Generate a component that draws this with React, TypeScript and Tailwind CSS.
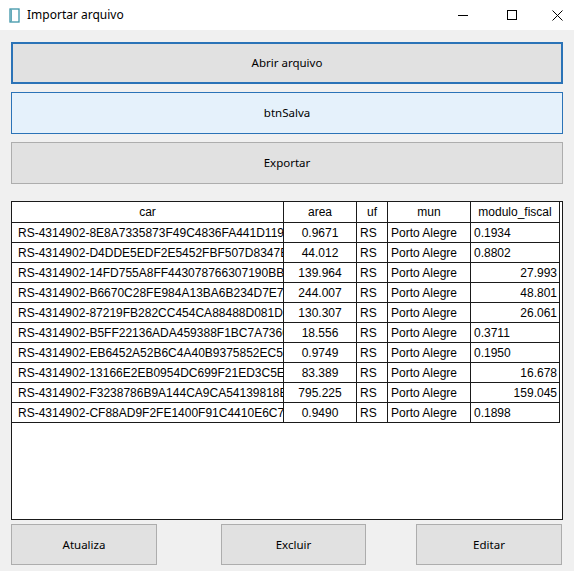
import React from "react";

type Row = { car: string; area: string; uf: string; mun: string; mf: string; right: boolean };

const rows: Row[] = [
  { car: "RS-4314902-8E8A7335873F49C4836FA441D1190", area: "0.9671", uf: "RS", mun: "Porto Alegre", mf: "0.1934", right: false },
  { car: "RS-4314902-D4DDE5EDF2E5452FBF507D8347B0", area: "44.012", uf: "RS", mun: "Porto Alegre", mf: "0.8802", right: false },
  { car: "RS-4314902-14FD755A8FF443078766307190BB", area: "139.964", uf: "RS", mun: "Porto Alegre", mf: "27.993", right: true },
  { car: "RS-4314902-B6670C28FE984A13BA6B234D7E7A", area: "244.007", uf: "RS", mun: "Porto Alegre", mf: "48.801", right: true },
  { car: "RS-4314902-87219FB282CC454CA88488D081D2", area: "130.307", uf: "RS", mun: "Porto Alegre", mf: "26.061", right: true },
  { car: "RS-4314902-B5FF22136ADA459388F1BC7A7360", area: "18.556", uf: "RS", mun: "Porto Alegre", mf: "0.3711", right: false },
  { car: "RS-4314902-EB6452A52B6C4A40B9375852EC5D", area: "0.9749", uf: "RS", mun: "Porto Alegre", mf: "0.1950", right: false },
  { car: "RS-4314902-13166E2EB0954DC699F21ED3C5EB", area: "83.389", uf: "RS", mun: "Porto Alegre", mf: "16.678", right: true },
  { car: "RS-4314902-F3238786B9A144CA9CA54139818B", area: "795.225", uf: "RS", mun: "Porto Alegre", mf: "159.045", right: true },
  { car: "RS-4314902-CF88AD9F2FE1400F91C4410E6C7D", area: "0.9490", uf: "RS", mun: "Porto Alegre", mf: "0.1898", right: false },
];

const cell = "h-[20px] border-r border-b border-[#1a1a1a] overflow-hidden whitespace-nowrap flex items-center";
const head = "h-[21px] border-r border-b border-[#1a1a1a] overflow-hidden whitespace-nowrap flex items-center justify-center";

export default function App() {
  return (
    <div
      className="w-[574px] h-[571px] flex flex-col bg-[#f0f0f0] text-[#000]"
      style={{ fontFamily: '"Noto Sans", "Open Sans", sans-serif' }}
    >
      {/* Title bar */}
      <div className="h-[30px] bg-white flex items-center shrink-0">
        <div className="w-[27px] flex justify-center pl-[2px]">
          <svg width="11" height="15" viewBox="0 0 11 15">
            <rect x="1" y="1" width="9" height="13" fill="#fff" stroke="#3e95a8" strokeWidth="1.3" />
            <line x1="2.3" y1="1.5" x2="2.3" y2="13.5" stroke="#3e95a8" strokeWidth="1" />
          </svg>
        </div>
        <span className="text-[12px] leading-none">Importar arquivo</span>
        <div className="ml-auto flex items-center h-full pr-[11px]">
          <svg width="10" height="10" viewBox="0 0 10 10">
            <line x1="0" y1="5.5" x2="10" y2="5.5" stroke="#000" strokeWidth="1" />
          </svg>
          <div className="w-[39px]" />
          <svg width="10" height="10" viewBox="0 0 10 10">
            <rect x="0.5" y="0.5" width="9" height="9" fill="none" stroke="#000" strokeWidth="1" />
          </svg>
          <div className="w-[35px]" />
          <svg width="11" height="11" viewBox="0 0 11 11">
            <path d="M0.5 0.5 L10.5 10.5 M10.5 0.5 L0.5 10.5" stroke="#000" strokeWidth="1" />
          </svg>
        </div>
      </div>

      {/* Content */}
      <div className="flex-1 flex flex-col pl-[11px] pr-[11px] pt-[12px]">
        <button className="h-[42px] w-full bg-[#e1e1e1] border-2 border-[#2b73b7] text-[11.5px] flex items-center justify-center">
          Abrir arquivo
        </button>
        <button className="mt-[8px] h-[42px] w-full bg-[#e5f1fb] border border-[#2b73b7] text-[11.5px] flex items-center justify-center">
          btnSalva
        </button>
        <button className="mt-[8px] h-[42px] w-full bg-[#e1e1e1] border border-[#adadad] text-[11.5px] flex items-center justify-center">
          Exportar
        </button>

        {/* Table */}
        <div
          className="mt-[17px] h-[319px] w-[552px] bg-white border border-[#1a1a1a] overflow-hidden"
          style={{ fontFamily: '"Liberation Sans", Arial, sans-serif' }}
        >
          <div className="grid grid-cols-[272px_73px_31px_83px_89px] text-[12px]">
            <div className={head}>car</div>
            <div className={head}>area</div>
            <div className={head}>uf</div>
            <div className={head}>mun</div>
            <div className={head}>modulo_fiscal</div>
            {rows.map((r, i) => (
              <React.Fragment key={i}>
                <div className={`${cell} pl-[6px]`}>{r.car}</div>
                <div className={`${cell} justify-center`}>{r.area}</div>
                <div className={`${cell} pl-[3px]`}>{r.uf}</div>
                <div className={`${cell} pl-[3px]`}>{r.mun}</div>
                <div className={`${cell} ${r.right ? "justify-end pr-[2px]" : "pl-[3px]"}`}>{r.mf}</div>
              </React.Fragment>
            ))}
          </div>
        </div>

        {/* Bottom buttons */}
        <div className="mt-[4px] flex items-center">
          <button className="h-[41px] w-[146px] bg-[#e1e1e1] border border-[#adadad] text-[11.5px] flex items-center justify-center">
            Atualiza
          </button>
          <button className="ml-[64px] h-[41px] w-[145px] bg-[#e1e1e1] border border-[#adadad] text-[11.5px] flex items-center justify-center">
            Excluir
          </button>
          <button className="ml-auto mr-[1px] h-[41px] w-[146px] bg-[#e1e1e1] border border-[#adadad] text-[11.5px] flex items-center justify-center">
            Editar
          </button>
        </div>
      </div>
    </div>
  );
}
